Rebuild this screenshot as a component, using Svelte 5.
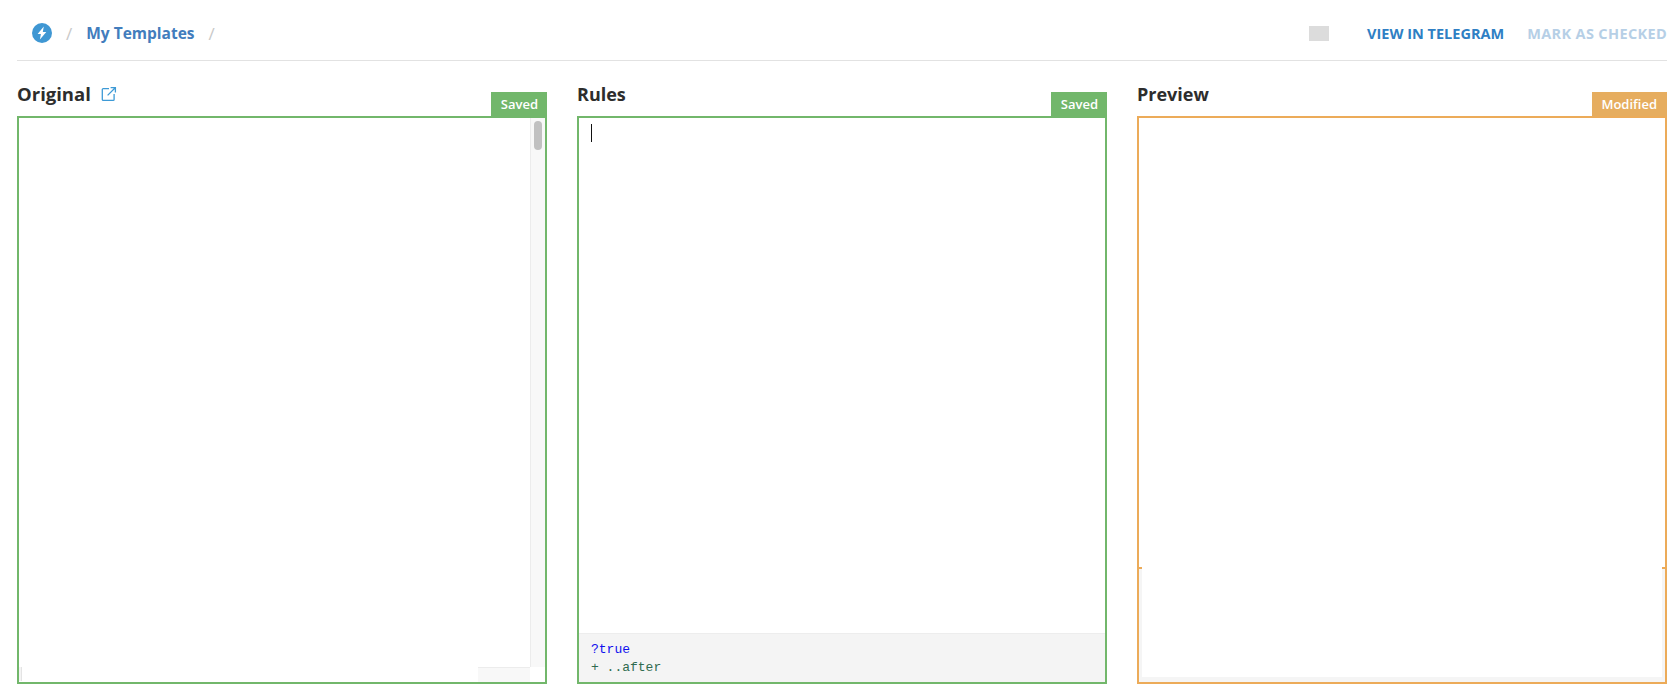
<script>
  const panes = [
    { title: 'Original', state: 'Saved', tone: 'ok', kind: 'original' },
    { title: 'Rules', state: 'Saved', tone: 'ok', kind: 'rules' },
    { title: 'Preview', state: 'Modified', tone: 'warn', kind: 'preview' }
  ];
</script>

<div class="page">
  <header class="top">
    <nav class="crumbs">
      <svg class="logo" width="20" height="20" viewBox="0 0 20 20" aria-hidden="true">
        <circle cx="10" cy="10" r="10" fill="#3f97d3" />
        <path d="M11.8 3.6 5.6 11h3.3l-1 5.4 6.4-7.5h-3.5z" fill="#fff" />
      </svg>
      <span class="sep">/</span>
      <a class="crumb">My Templates</a>
      <span class="sep">/</span>
    </nav>
    <div class="actions">
      <span class="placeholder"></span>
      <a class="action">VIEW IN TELEGRAM</a>
      <a class="action muted">MARK AS CHECKED</a>
    </div>
  </header>

  <main class="panes">
    {#each panes as pane}
      <section class="pane">
        <div class="pane-head">
          <h2 class={pane.kind}>
            {pane.title}
            {#if pane.kind === 'original'}
              <svg class="ext" width="16" height="16" viewBox="0 0 16 16" fill="none" stroke="#3d9ad6" stroke-width="1.3" aria-hidden="true">
                <path d="M8 2.6H2.2a.9.9 0 0 0-.9.9v10a.9.9 0 0 0 .9.9h10a.9.9 0 0 0 .9-.9V8" />
                <path d="M6.6 9.4 14 2M9.6 1.6h4.8v4.8" />
              </svg>
            {/if}
          </h2>
          <span class="badge {pane.tone}">{pane.state}</span>
        </div>

        <div class="box {pane.tone} {pane.kind}">
          {#if pane.kind === 'original'}
            <div class="viewport"><span class="tick"></span></div>
            <div class="vtrack"><span class="thumb"></span></div>
            <div class="hrow"><span class="hblank"></span><span class="htrack"></span></div>
            <div class="corner"></div>
          {:else if pane.kind === 'rules'}
            <div class="editor"><span class="caret"></span></div>
            <div class="hint">
              <div class="q">?true</div>
              <div class="plus">+ ..after</div>
            </div>
          {:else}
            <div class="upper"></div>
            <div class="notches"><span></span><span></span></div>
            <div class="frame"><div class="inner"></div></div>
          {/if}
        </div>
      </section>
    {/each}
  </main>
</div>

<style>
  :global(body) {
    margin: 0;
    background: #fff;
    font-family: "Open Sans", "Liberation Sans", sans-serif;
    color: #2d2d2d;
  }
  .page {
    padding: 0 11px 0 17px;
    height: 700px;
    box-sizing: border-box;
    overflow: hidden;
  }
  .top {
    height: 61px;
    box-sizing: border-box;
    border-bottom: 1px solid #e2e2e2;
    display: flex;
    align-items: center;
    justify-content: space-between;
    padding: 6px 0 0 15px;
  }
  .crumbs {
    display: flex;
    align-items: center;
  }
  .logo { display: block; }
  .sep {
    color: #c8c8c8;
    font-size: 17px;
    margin: 0 14px 0 14px;
  }
  .crumb {
    color: #427dbd;
    font-size: 15.5px;
    font-weight: 700;
  }
  .actions {
    display: flex;
    align-items: center;
  }
  .placeholder {
    width: 20px;
    height: 15px;
    background: #dcdcdc;
    margin-right: 38px;
  }
  .action {
    color: #2f7fc4;
    font-size: 14.5px;
    font-weight: 700;
    margin-left: 23px;
  }
  .placeholder + .action { margin-left: 0; }
  .action.muted { color: #b6cfe6; letter-spacing: 0.35px; }

  .panes {
    display: grid;
    grid-template-columns: repeat(3, 530px);
    column-gap: 30px;
  }
  .pane-head {
    height: 55px;
    display: flex;
    align-items: flex-end;
    justify-content: space-between;
  }
  h2 {
    margin: 0 0 10px;
    font-size: 18px;
    font-weight: 700;
    line-height: 24px;
    display: flex;
    align-items: center;
    gap: 10px;
  }
  h2.original { font-size: 18.5px; }
  .ext { display: block; }
  .badge {
    color: #fff;
    font-size: 13px;
    font-weight: 600;
    height: 24px;
    line-height: 24px;
    padding: 0 9px 0 10px;
  }
  .badge.ok { background: #72b76b; }
  .badge.warn { background: #e6ad5f; padding: 0 10px 0 9px; }

  .box {
    height: 568px;
    box-sizing: border-box;
    border: 2px solid;
    background: #fff;
    overflow: hidden;
  }
  .box.ok { border-color: #72b76b; }
  .box.warn { border-color: #ecab59; }

  .box.original {
    display: grid;
    grid-template-columns: 1fr 15px;
    grid-template-rows: 1fr 15px;
  }
  .viewport { position: relative; }
  .tick {
    position: absolute;
    left: 0;
    bottom: -14px;
    width: 2px;
    height: 14px;
    background: #f4f4f4;
    border-right: 1px solid #e4e4e4;
  }
  .vtrack {
    background: #f8f8f8;
    border-left: 1px solid #ececec;
    box-sizing: border-box;
    padding: 3px 0 0 3px;
  }
  .thumb {
    display: block;
    width: 8px;
    height: 29px;
    border-radius: 4px;
    background: #c1c1c1;
  }
  .hrow { display: flex; }
  .hblank { width: 459px; flex: none; }
  .htrack {
    flex: 1;
    background: #f8f8f8;
    border-top: 1px solid #ececec;
  }
  .corner { background: #fff; }

  .box.rules {
    display: flex;
    flex-direction: column;
  }
  .editor {
    flex: 1;
    padding: 6px 0 0 12px;
  }
  .caret {
    display: block;
    width: 1px;
    height: 18px;
    background: #111;
  }
  .hint {
    height: 49px;
    box-sizing: border-box;
    background: #f4f4f4;
    border-top: 1px solid #ededed;
    padding: 7px 0 0 12px;
    font-family: "Liberation Mono", monospace;
    font-size: 13px;
    line-height: 18px;
  }
  .q { color: #1010ee; }
  .plus { color: #2f6b4f; }

  .box.preview {
    display: flex;
    flex-direction: column;
  }
  .upper { flex: 1; }
  .notches {
    height: 2px;
    display: flex;
    justify-content: space-between;
  }
  .notches span {
    width: 3px;
    background: #ecab59;
  }
  .frame {
    height: 113px;
    box-sizing: border-box;
    background: #f5f5f5;
    padding: 0 3px 5px;
  }
  .inner {
    height: 100%;
    background: #fff;
  }
</style>
